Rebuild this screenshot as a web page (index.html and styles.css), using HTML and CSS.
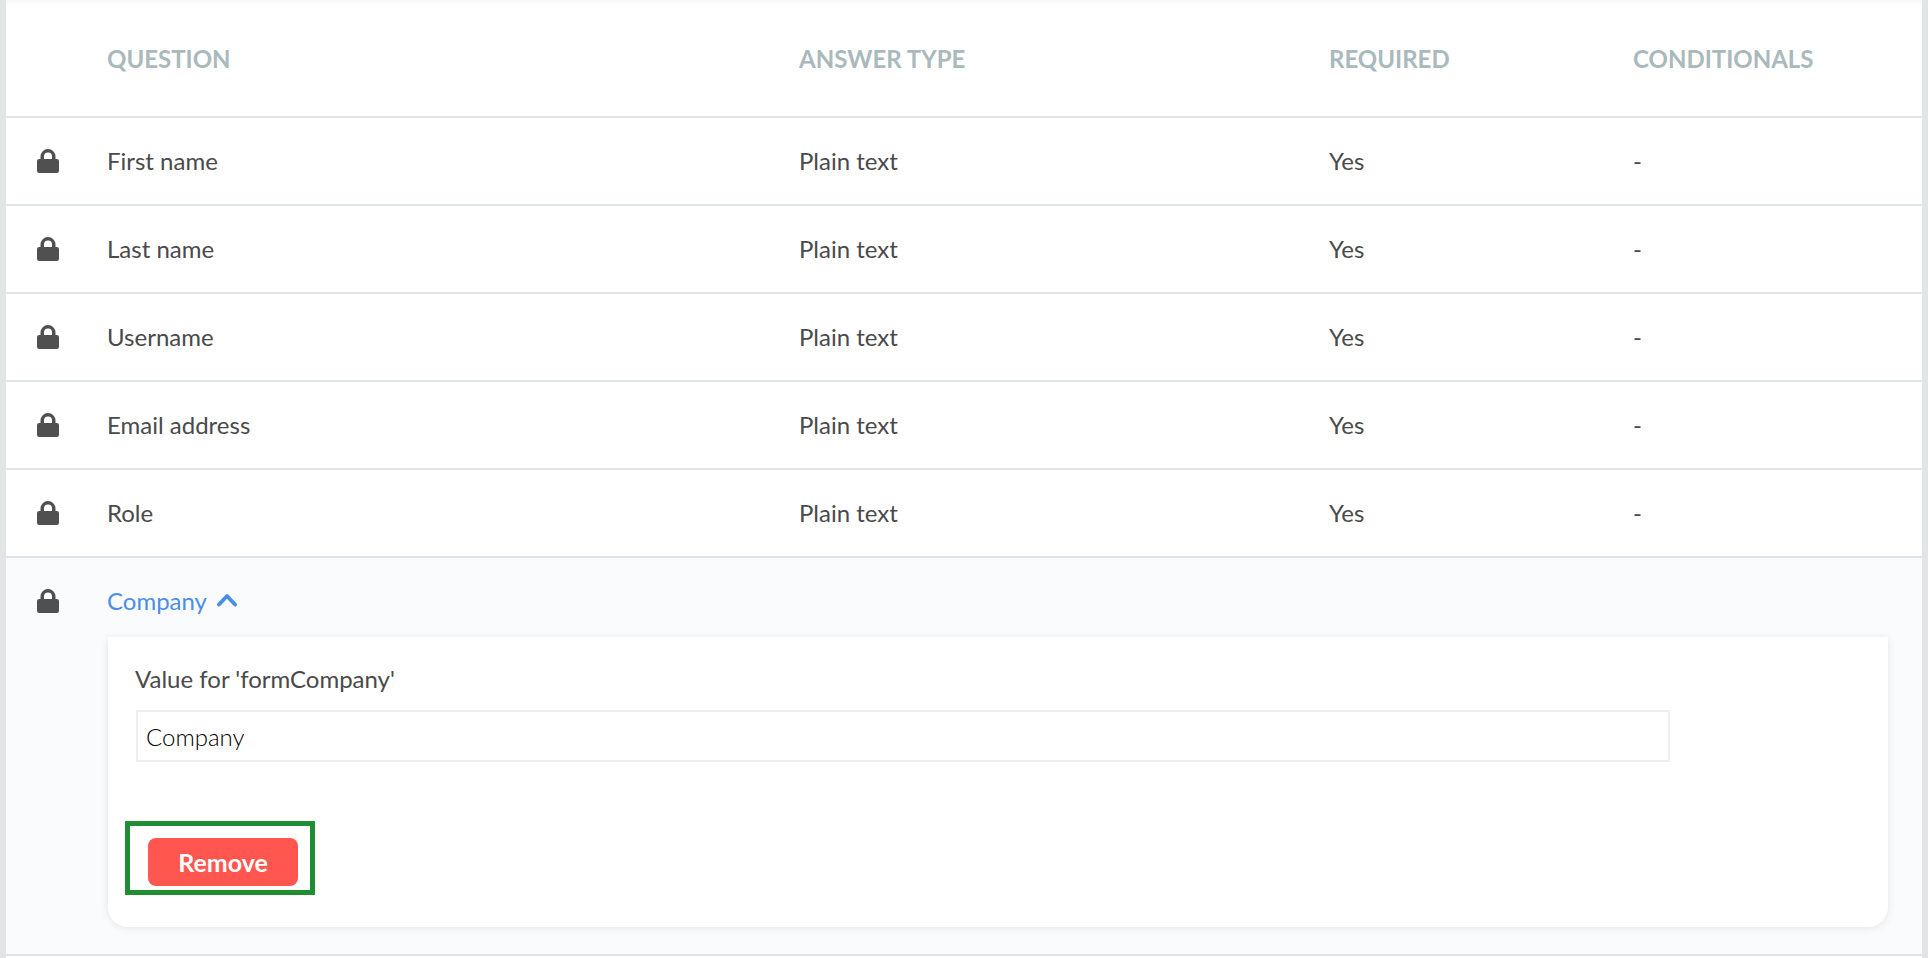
FILE: index.html
```html
<!DOCTYPE html>
<html lang="en">
<head>
<meta charset="utf-8">
<title>Questions</title>
<link rel="stylesheet" href="styles.css">
</head>
<body>
<svg class="defs" width="0" height="0" aria-hidden="true"><symbol id="lock" viewBox="0 0 22 24"><path d="M3.500 10V7.500a7.500 7.500 0 0 1 15 0V10h1.300A2.200 2.200 0 0 1 22 12.200v9.600a2.200 2.200 0 0 1-2.200 2.200H2.200A2.200 2.200 0 0 1 0 21.800v-9.600A2.200 2.200 0 0 1 2.200 10H3.500zm3.500 0h8V7.500a4 4 0 0 0-8 0V10z"/></symbol></svg>
<main class="panel">
  <div class="row head">
    <span></span><span>QUESTION</span><span>ANSWER TYPE</span><span>REQUIRED</span><span>CONDITIONALS</span>
  </div>
  <div class="row"><svg class="lock"><use href="#lock"/></svg><span>First name</span><span>Plain text</span><span>Yes</span><span>-</span></div>
  <div class="row"><svg class="lock"><use href="#lock"/></svg><span>Last name</span><span>Plain text</span><span>Yes</span><span>-</span></div>
  <div class="row"><svg class="lock"><use href="#lock"/></svg><span>Username</span><span>Plain text</span><span>Yes</span><span>-</span></div>
  <div class="row"><svg class="lock"><use href="#lock"/></svg><span>Email address</span><span>Plain text</span><span>Yes</span><span>-</span></div>
  <div class="row"><svg class="lock"><use href="#lock"/></svg><span>Role</span><span>Plain text</span><span>Yes</span><span>-</span></div>
  <section class="expanded">
    <div class="exp-title">
      <svg class="lock"><use href="#lock"/></svg>
      <span class="link">Company
        <svg class="chev" viewBox="0 0 20 14"><path d="M2 11.500 10 3l8 8.500" fill="none" stroke="currentColor" stroke-width="4" stroke-linecap="round" stroke-linejoin="round"/></svg>
      </span>
    </div>
    <div class="card">
      <label class="label" for="val">Value for 'formCompany'</label>
      <input id="val" class="input" type="text" value="Company">
      <div class="highlight"><button class="remove" type="button">Remove</button></div>
    </div>
  </section>
</main>
</body>
</html>
```
FILE: styles.css
```css
* { box-sizing: border-box; }
html, body { margin: 0; height: 100%; overflow: hidden; background: #fff; }
body { font-family: Lato, "Liberation Sans", sans-serif; color: #4a4a4a; }
.defs { position: absolute; }
.panel {
  height: 958px;
  border-left: 6px solid #e1e5e6;
  border-right: 6px solid #e1e5e6;
  box-shadow: inset 0 6px 6px -4px rgba(0, 0, 0, .05);
}
.row {
  display: grid;
  grid-template-columns: 101px 692px 530px 304px 1fr;
  align-items: center;
  height: 88px;
  padding-bottom: 2px;
  border-bottom: 2px solid #dfe4e5;
  font-size: 24px;
}
.row.head {
  height: 118px;
  padding-bottom: 0;
  font-weight: 700;
  color: #a9b9bc;
}
.lock { width: 22px; height: 24px; margin: 1px 0 0 31px; fill: #505050; }
.expanded {
  height: 398px;
  padding: 0 0 0 102px;
  background: #fafbfd;
  border-bottom: 2px solid #dfe4e5;
}
.exp-title {
  display: grid;
  grid-template-columns: 0 1fr;
  align-items: center;
  height: 79px;
  padding-top: 5px;
  font-size: 24px;
}
.exp-title .lock { margin-left: -71px; }
.link { color: #4a90e2; margin-left: -1px; display: flex; align-items: center; gap: 10px; }
.chev { width: 20px; height: 14px; }
.card {
  width: 1780px;
  height: 290px;
  padding: 26px 28px 0;
  background: #fff;
  border-radius: 0 0 20px 20px;
  box-shadow: 0 1px 8px rgba(0, 0, 0, .09);
  display: flex;
  flex-direction: column;
  align-items: flex-start;
}
.label { font-size: 24px; line-height: 32px; margin-left: -1px; }
.input {
  width: 1534px;
  height: 52px;
  margin-top: 15px;
  padding: 0 8px;
  border: 2px solid #eee;
  outline: 0;
  background: #fff;
  font: 300 24px Lato, "Liberation Sans", sans-serif;
  color: #000;
}
.highlight {
  width: 190px;
  height: 74px;
  margin: 59px 0 0 -11px;
  border: 5px solid #1f8e32;
  padding: 12px 18px;
}
.remove {
  display: block;
  width: 150px;
  height: 48px;
  padding: 0;
  border: 0;
  border-radius: 8px;
  background: #ff5750;
  color: #fff;
  font: 700 25px Lato, "Liberation Sans", sans-serif;
}
```
